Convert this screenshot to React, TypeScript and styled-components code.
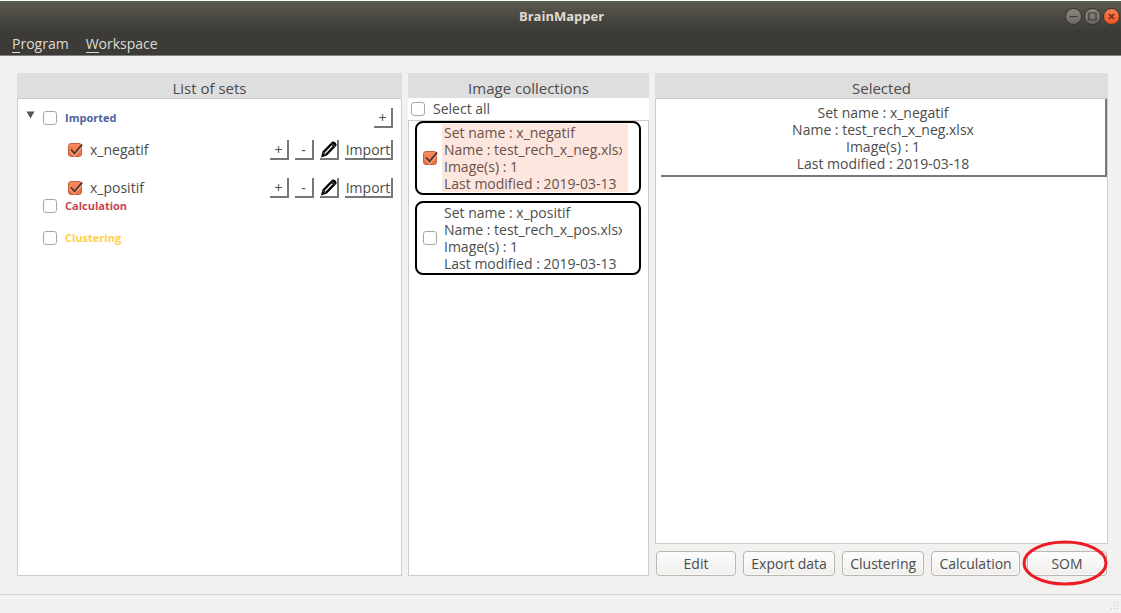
import React from 'react';
import styled, { createGlobalStyle, css } from 'styled-components';

const GlobalStyle = createGlobalStyle`
  *, *::before, *::after { box-sizing: border-box; }
  body {
    margin: 0;
    background: #f2f1f0;
    color: #4c4c4c;
    font-family: "Open Sans", "Noto Sans", sans-serif;
    font-size: 14px;
    line-height: 17px;
  }
  button, input { font: inherit; color: inherit; margin: 0; }
`;

const Window = styled.div`
  display: flex;
  flex-direction: column;
  min-height: 100vh;
`;

const Chrome = styled.header`
  border-top: 1px solid #fff;
  border-bottom: 1px solid #84827e;
  background: linear-gradient(#55604f 0, #5a574e 2px, #3c3b37 30px);
  color: #dfdbd2;
`;

const TitleBar = styled.div`
  display: grid;
  grid-template-columns: 1fr auto 1fr;
  align-items: center;
  height: 30px;
  padding: 0 1px 0 3px;
`;

const Title = styled.h1`
  grid-column: 2;
  margin: 0;
  font-size: 13px;
  font-weight: 700;
`;

const WindowControls = styled.div`
  display: flex;
  justify-content: flex-end;
  gap: 2px;
`;

const WindowButton = styled.button<{ $close?: boolean }>`
  display: block;
  width: 17px;
  height: 17px;
  padding: 0;
  border: 1px solid #33322e;
  border-radius: 50%;
  background: ${p => (p.$close ? 'linear-gradient(#f78058, #e9541f)' : 'linear-gradient(#8b8981, #696760)')};
  color: ${p => (p.$close ? '#6b2a10' : '#3b3a36')};
  svg { display: block; }
`;

const MenuBar = styled.nav`
  display: flex;
  gap: 17px;
  height: 24px;
  padding: 3px 12px 0;
`;

const MenuButton = styled.button`
  height: 20px;
  padding: 0;
  border: 0;
  background: none;
  line-height: 20px;
`;

const Mnemonic = styled.span`
  display: inline-block;
  height: 19px;
  border-bottom: 1px solid #dfdbd2;
  vertical-align: top;
`;

const Workspace = styled.main`
  flex: 1;
  display: grid;
  grid-template-columns: minmax(0, 385fr) minmax(0, 241fr) minmax(0, 453fr);
  gap: 6px;
  padding: 17px 13px 18px 17px;
`;

const Column = styled.section`
  display: flex;
  flex-direction: column;
`;

const Heading = styled.h2`
  margin: 0;
  height: 25px;
  padding-top: 4px;
  background: #dedede;
  font-size: 15px;
  font-weight: 400;
  line-height: 22px;
  text-align: center;
`;

const Panel = styled.div`
  flex: 1;
  border: 1px solid #cfcdca;
  background: #fff;
`;

const SetTree = styled(Panel)`
  padding: 9px 8px 0 7px;
`;

const TreeRow = styled.div`
  display: flex;
  align-items: center;
  height: 20px;
`;

const Expander = styled.button`
  width: 11px;
  height: 18px;
  padding: 0;
  border: 0;
  background: none;
  svg { display: block; }
`;

const GroupRow = styled(TreeRow)<{ $spaced?: boolean }>`
  height: 16px;
  padding-left: 18px;
  margin-top: ${p => (p.$spaced ? '16px' : '0')};
`;

const ParentRow = styled(TreeRow)`
  gap: 7px;
`;

const Children = styled.div`
  display: flex;
  flex-direction: column;
  gap: 18px;
  padding: 12px 0 0 43px;
`;

const CheckLabel = styled.label`
  display: inline-flex;
  align-items: center;
  gap: 8px;
  line-height: 16px;
`;

const GroupName = styled.span<{ $tone: string }>`
  color: ${p => p.$tone};
  font-size: 11px;
  font-weight: 700;
`;

const CheckBox = styled.span`
  position: relative;
  display: block;
  flex: none;
  width: 14px;
  height: 14px;
  svg {
    position: absolute;
    inset: -1px;
    pointer-events: none;
    display: none;
  }
  input:checked + svg { display: block; }
`;

const CheckInput = styled.input`
  appearance: none;
  display: block;
  width: 14px;
  height: 14px;
  border: 1px solid #aaa7a2;
  border-radius: 3px;
  background: #fff;
  &:checked {
    border-color: #c4623d;
    background: linear-gradient(#f98d62, #ee6c3c);
  }
`;

const Tools = styled.div`
  display: flex;
  gap: 6px;
  margin-left: auto;
`;

const raised = css`
  border: 0 solid #777;
  border-right-width: 2px;
  border-bottom-width: 2px;
  background: #fff;
`;

const ToolButton = styled.button<{ $wide?: boolean }>`
  ${raised}
  display: grid;
  place-items: center;
  width: ${p => (p.$wide ? '48px' : '19px')};
  height: 20px;
  padding: 0;
  line-height: 20px;
`;

const SelectAll = styled.div`
  display: flex;
  align-items: center;
  height: 22px;
  padding: 0 3px;
  background: #fff;
`;

const CollectionList = styled(Panel)`
  display: flex;
  flex-direction: column;
  gap: 6px;
  padding: 0 7px 0 6px;
`;

const CollectionCard = styled.label`
  display: flex;
  align-items: center;
  gap: 5px;
  height: 74px;
  padding: 0 11px 0 6px;
  border: 2px solid #000;
  border-radius: 8px;
`;

const Details = styled.span<{ $active?: boolean }>`
  flex: 1;
  min-width: 0;
  padding: 0 6px 0 2px;
  background: ${p => (p.$active ? '#fde6de' : 'transparent')};
  color: ${p => (p.$active ? '#6b5049' : '#4c4c4c')};
`;

const DetailLine = styled.span`
  display: block;
  overflow-x: clip;
  overflow-y: visible;
  white-space: nowrap;
`;

const SelectedCard = styled.button`
  ${raised}
  display: block;
  width: calc(100% - 5px);
  height: 78px;
  margin-left: 5px;
  padding: 2px 0 0;
  text-align: center;
`;

const Actions = styled.div`
  display: flex;
  justify-content: space-between;
  padding: 7px 1px 0;
`;

const ActionButton = styled.button`
  height: 25px;
  min-width: 80px;
  padding: 0 7px;
  border: 1px solid #b9b6b1;
  border-radius: 4px;
  background: linear-gradient(#fdfdfd, #f0efed);
  box-shadow: inset 0 0 0 1px #fafafa;
`;

const Highlighted = styled.div`
  position: relative;
  svg {
    position: absolute;
    left: -5px;
    top: -11px;
    pointer-events: none;
  }
`;

const StatusBar = styled.footer`
  display: flex;
  justify-content: flex-end;
  align-items: flex-end;
  height: 19px;
  border-top: 1px solid #d6d4d1;
  svg { display: block; }
`;

function Check({ checked }: { checked?: boolean }) {
  return (
    <CheckBox>
      <CheckInput type="checkbox" defaultChecked={checked} />
      <svg width="16" height="16" viewBox="0 0 16 16" fill="none" aria-hidden="true">
        <path d="M4 8l3.5 4L15 3" stroke="#fff" strokeOpacity=".45" strokeWidth="3.5" />
        <path d="M4 7.5l3.5 4L15 2.5" stroke="#693524" strokeWidth="2" />
      </svg>
    </CheckBox>
  );
}

function Pencil() {
  return (
    <svg width="17" height="18" viewBox="0 0 17 18" aria-hidden="true">
      <path d="M1 17.5l1.5-6L11.8 2c1.800-1.900 6.200 1.800 4.400 4L7 15.500z" fill="#000" />
      <path d="M5 13.200l7.200-7.400" stroke="#fff" strokeWidth="1.300" />
      <path d="M11.600 3.200l3.600 3.400" stroke="#fff" strokeOpacity=".7" strokeWidth="0.700" />
      <path d="M3 12.500l2.500 2.700" stroke="#fff" strokeOpacity=".7" strokeWidth="0.800" />
    </svg>
  );
}

function SetRow({ name }: { name: string }) {
  return (
    <TreeRow>
      <CheckLabel><Check checked />{name}</CheckLabel>
      <Tools>
        <ToolButton aria-label={`Add to ${name}`}>+</ToolButton>
        <ToolButton aria-label={`Remove ${name}`}>-</ToolButton>
        <ToolButton aria-label={`Rename ${name}`}><Pencil /></ToolButton>
        <ToolButton $wide>Import</ToolButton>
      </Tools>
    </TreeRow>
  );
}

interface Info { set: string; file: string; date: string }

function InfoLines({ set, file, date }: Info) {
  return (
    <>
      <DetailLine>Set name : {set}</DetailLine>
      <DetailLine>Name : {file}</DetailLine>
      <DetailLine>Image(s) : 1</DetailLine>
      <DetailLine>Last modified : {date}</DetailLine>
    </>
  );
}

const collections: (Info & { active: boolean })[] = [
  { set: 'x_negatif', file: 'test_rech_x_neg.xlsx', date: '2019-03-13', active: true },
  { set: 'x_positif', file: 'test_rech_x_pos.xlsx', date: '2019-03-13', active: false },
];

export default function App() {
  return (
    <Window>
      <GlobalStyle />
      <Chrome>
        <TitleBar>
          <Title>BrainMapper</Title>
          <WindowControls>
            <WindowButton aria-label="Minimize">
              <svg width="15" height="15" viewBox="0 0 15 15"><path d="M3.5 7.5h8" stroke="currentColor" /></svg>
            </WindowButton>
            <WindowButton aria-label="Maximize">
              <svg width="15" height="15" viewBox="0 0 15 15"><path d="M4 4h7v7H4z" fill="none" stroke="currentColor" strokeWidth="1.2" /></svg>
            </WindowButton>
            <WindowButton $close aria-label="Close">
              <svg width="15" height="15" viewBox="0 0 15 15"><path d="M5 5l5 5M10 5l-5 5" stroke="currentColor" strokeWidth="1.5" /></svg>
            </WindowButton>
          </WindowControls>
        </TitleBar>
        <MenuBar>
          <MenuButton><Mnemonic>P</Mnemonic>rogram</MenuButton>
          <MenuButton><Mnemonic>W</Mnemonic>orkspace</MenuButton>
        </MenuBar>
      </Chrome>
      <Workspace>
        <Column>
          <Heading>List of sets</Heading>
          <SetTree>
            <ParentRow>
              <Expander aria-label="Collapse Imported">
                <svg width="11" height="18" viewBox="0 0 11 18"><path d="M1.5 2.5h8L5.5 9.5z" fill="#555" /></svg>
              </Expander>
              <CheckLabel><Check /><GroupName $tone="#4d639e">Imported</GroupName></CheckLabel>
              <Tools><ToolButton aria-label="Add set">+</ToolButton></Tools>
            </ParentRow>
            <Children>
              <SetRow name="x_negatif" />
              <SetRow name="x_positif" />
            </Children>
            <GroupRow>
              <CheckLabel><Check /><GroupName $tone="#c9454f">Calculation</GroupName></CheckLabel>
            </GroupRow>
            <GroupRow $spaced>
              <CheckLabel><Check /><GroupName $tone="#ffd043">Clustering</GroupName></CheckLabel>
            </GroupRow>
          </SetTree>
        </Column>
        <Column>
          <Heading>Image collections</Heading>
          <SelectAll><CheckLabel><Check />Select all</CheckLabel></SelectAll>
          <CollectionList>
            {collections.map(c => (
              <CollectionCard key={c.set}>
                <Check checked={c.active} />
                <Details $active={c.active}><InfoLines {...c} /></Details>
              </CollectionCard>
            ))}
          </CollectionList>
        </Column>
        <Column>
          <Heading>Selected</Heading>
          <Panel>
            <SelectedCard>
              <InfoLines set="x_negatif" file="test_rech_x_neg.xlsx" date="2019-03-18" />
            </SelectedCard>
          </Panel>
          <Actions>
            <ActionButton>Edit</ActionButton>
            <ActionButton>Export data</ActionButton>
            <ActionButton>Clustering</ActionButton>
            <ActionButton>Calculation</ActionButton>
            <Highlighted>
              <ActionButton>SOM</ActionButton>
              <svg width="86" height="46" viewBox="0 0 86 46" aria-hidden="true">
                <ellipse cx="43" cy="23" rx="41" ry="21" fill="none" stroke="#ed1c24" strokeWidth="3" />
              </svg>
            </Highlighted>
          </Actions>
        </Column>
      </Workspace>
      <StatusBar>
        <svg width="12" height="12" viewBox="0 0 12 12" fill="#c8c6c3" aria-hidden="true">
          <path d="M8 1h1v1h-1zM5 4h1v1h-1zM8 4h1v1h-1zM2 7h1v1h-1zM5 7h1v1h-1zM8 7h1v1h-1z" />
        </svg>
      </StatusBar>
    </Window>
  );
}
